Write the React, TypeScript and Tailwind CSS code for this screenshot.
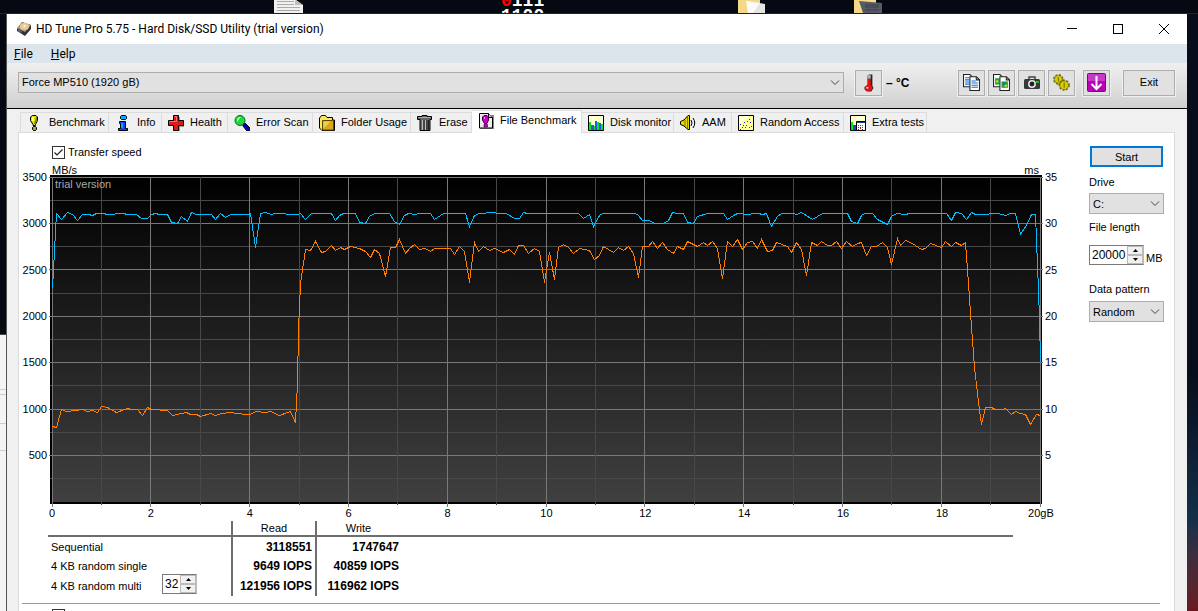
import type { ReactNode } from "react";

const BLUE =
  "52,288 56,213 61,219 67,212 72,214 77,220 82,214 88,214 92,215 96,213 103,213 107,214 113,214 116,213 123,213 127,214 136,214 141,218 147,218 151,214 155,213 159,214 167,214 171,222 177,223 181,216 187,221 191,212 196,214 211,214 215,219 220,213 225,217 230,214 248,214 250,213 255,247 260,213 265,212 271,214 274,213 283,213 288,214 297,214 300,213 305,219 311,213 331,213 335,220 339,215 343,213 355,213 359,222 365,223 369,216 374,213 389,213 394,221 399,224 404,215 408,213 414,214 419,213 430,213 434,219 440,215 443,213 465,213 469,226 474,215 479,213 493,212 498,213 506,213 514,218 519,218 523,212 527,213 578,213 583,218 589,214 593,226 599,215 602,213 635,213 638,215 642,220 648,220 655,223 663,223 668,220 672,212 677,213 683,213 687,222 693,223 697,216 707,213 723,213 727,219 733,215 737,213 748,214 753,213 758,213 762,214 766,213 771,226 777,216 781,213 793,213 796,214 801,212 812,219 822,213 847,213 851,221 857,223 861,215 864,213 872,213 877,219 887,224 891,216 896,213 905,214 909,213 946,213 951,220 955,212 961,213 966,219 971,212 975,214 987,214 990,213 998,213 1005,215 1010,213 1015,213 1020,234 1027,223 1031,214 1035,214 1038,290 1039,318 1040,362";

const ORANGE =
  "52,426 56,427 61,409 66,411 75,410 82,409 87,411 92,410 97,412 101,406 107,407 116,412 127,408 131,409 137,409 142,415 147,407 151,409 167,410 172,415 186,412 190,414 196,414 200,416 210,413 215,415 221,413 230,412 245,414 250,414 255,411 265,412 270,411 279,415 290,411 295,422 297,383 298,330 300,283 305,249 310,250 315,241 321,252 325,251 331,245 335,250 340,247 344,249 350,246 359,248 365,251 370,257 374,249 379,253 385,276 390,247 395,247 399,239 405,253 409,248 414,244 419,249 425,248 430,251 434,248 450,248 454,254 459,246 464,251 469,282 474,242 478,251 483,246 489,250 494,248 503,252 509,249 514,254 518,245 523,245 528,253 534,248 539,251 544,282 549,252 554,279 558,247 563,244 568,247 573,253 579,248 589,250 594,259 599,255 603,246 613,252 618,247 623,250 628,246 633,253 638,277 642,246 648,246 652,241 657,248 662,242 667,249 673,253 677,246 683,249 687,241 697,246 703,242 707,245 712,241 717,248 722,278 727,241 732,246 737,239 742,249 747,242 752,241 757,248 761,239 767,251 772,250 776,242 787,246 791,252 796,242 801,249 806,275 811,242 817,245 821,241 827,245 831,245 836,241 841,248 846,241 852,246 857,243 861,242 866,255 871,246 876,246 882,242 887,247 891,264 897,238 900,245 905,240 912,243 921,249 925,248 930,243 941,247 945,241 951,246 955,242 961,245 965,242 969,297 970,313 974,367 979,410 981,424 985,407 991,407 995,409 1002,409 1005,408 1011,414 1015,411 1020,413 1025,414 1030,424 1036,414 1040,415";

const SPEEDS = ["3500", "3000", "2500", "2000", "1500", "1000", "500"];
const TIMES = ["35", "30", "25", "20", "15", "10", "5"];
const POSITIONS = ["0", "2", "4", "6", "8", "10", "12", "14", "16", "18", "20gB"];

const GRID_X = Array.from({ length: 21 }, (_, i) => Math.floor(52 + i * 49.4));
const GRID_Y = Array.from({ length: 14 }, (_, i) => Math.floor(177 + i * 23.2));

function Icon({ children, size = 16 }: { children: ReactNode; size?: number }) {
  return (
    <svg
      className="shrink-0"
      width={size}
      height={size}
      viewBox="0 0 16 16"
      aria-hidden="true"
    >
      {children}
    </svg>
  );
}

const BenchmarkIcon = (
  <Icon>
    <path d="M5.500.5h3.500l1.500 1.500v3.500L8.500 9.500v1H6v-1L3.500 5.500V2z" fill="#e0e000" stroke="#000" />
    <path d="M5 2h2v4H5z" fill="#ffff90" />
    <path d="M9 2h1v4L8 9H7z" fill="#888800" />
    <path d="M5.500 12.500l1-1h2l1 1v2l-1 1h-2l-1-1z" fill="#a8a800" stroke="#000" />
  </Icon>
);

const InfoIcon = (
  <Icon>
    <path d="M6.500.500h4l1 1v2l-1 1h-4l-1-1v-2z" fill="#08a8f8" stroke="#000" />
    <path d="M4.500 6.500h6v7h2v2h-9v-2h2v-5h-1z" fill="#0048f8" stroke="#000" />
    <path d="M6 8h2v5H6z" fill="#18a0ff" />
  </Icon>
);

const HealthIcon = (
  <Icon>
    <path d="M6 2h6v4h4v6h-4v4H6z" fill="#999" />
    <path d="M5.500.5h5v5h5v5h-5v5h-5v-5h-5v-5h5z" fill="#e01818" stroke="#000" />
    <path d="M6.500 1.500h2v5h-7v1" fill="none" stroke="#ff7070" />
  </Icon>
);

const ScanIcon = (
  <Icon>
    <path d="M9 9l2-1 5 5v3h-3L9 11z" fill="#0000b8" stroke="#000" />
    <circle cx="6" cy="5.500" r="5" fill="#20d838" stroke="#063" />
    <path d="M3 4l2-2h2L3 7z" fill="#a0ffa8" />
  </Icon>
);

const FolderIcon = (
  <Icon>
    <path d="M.5 3l2-2.500h4L8 2.500h5.500V5L15.500 5v10.500H3L.5 13z" fill="#f8e860" stroke="#000" />
    <path d="M3.500 5.500h11v9.500h-11z" fill="#d8a818" stroke="#604800" />
    <path d="M4.500 6.500h7l-7 7z" fill="#f0d050" />
  </Icon>
);

const EraseIcon = (
  <Icon>
    <path d="M5 .5h5v1h4.500v3h-1.500v11H3v-11H.5v-3H5z" fill="#666" stroke="#000" />
    <path d="M1.500 2.500h12" stroke="#aaa" />
    <path d="M5.500 5v10M8.500 5v10" stroke="#bbb" />
    <path d="M7 5v10M10 5v10M11.500 5v10" stroke="#222" />
  </Icon>
);

const FileBenchIcon = (
  <Icon>
    <path d="M2 2h14v14H2z" fill="#888" />
    <path d="M1.500.500h9l4 4v10.500h-13z" fill="#ececec" stroke="#000" />
    <path d="M10.500.500v4h4" fill="#ccc" stroke="#000" />
    <path d="M6 2.500h3L10.500 4v3L9 10.500H6.500L4.500 7V4z" fill="#c800c8" stroke="#400040" />
    <path d="M6 4h1v2H6z" fill="#ff90ff" />
    <path d="M6 11.500h3.500v2.500H6z" fill="#c800c8" stroke="#400040" strokeWidth=".7" />
  </Icon>
);

const MonitorIcon = (
  <Icon>
    <path d="M.5.500h15v15H.5z" fill="#ffffd0" stroke="#000" />
    <path d="M1 7h2v8H1zM6 11h2v4H6zM9 7h2v8H9zM13 9h2v6h-2z" fill="#00e820" />
    <path d="M3 10h3v5H3zM7 6h2v9H7zM11 8h2v7h-2z" fill="#3050f0" />
  </Icon>
);

const SpeakerIcon = (
  <Icon>
    <path d="M.5 6.500L4 5 8 .5h1.500v14H8L4 11 .5 9.500z" fill="#e8d800" stroke="#000" />
    <path d="M5 5v6M7.500 2v11" stroke="#807800" />
    <path d="M11 5q2 3 0 6M13 3q3.500 5 0 10" fill="none" stroke="#000" />
  </Icon>
);

const RandomIcon = (
  <Icon>
    <path d="M.5.500h15v15H.5z" fill="#ffff98" stroke="#000" />
    <path d="M1 1h10L1 10z" fill="#ffffd8" />
    <path d="M2 9h1v1H2zM5 10h1v1H5zM6 7h1v1H6zM9 6h1v1H9zM11 4h1v1h-1zM12 7h1v1h-1z" fill="#2020c0" />
    <path d="M2 14h1v1H2zM4 12h1v1H4zM7 12h1v1H7zM8 10h1v1H8zM11 12h1v1h-1zM13 11h1v1h-1z" fill="#e00000" />
  </Icon>
);

const ExtraIcon = (
  <Icon>
    <path d="M.5.500h15v15H.5z" fill="#ffffc8" stroke="#000" />
    <path d="M1 7h2v8H1z" fill="#00e820" />
    <path d="M3 10h3v5H3z" fill="#2040e0" />
    <path d="M6.500 6.500h9v9h-9z" fill="#fff" stroke="#000" />
    <path d="M7 7h8v1H7z" fill="#2040a0" />
    <path d="M8 10h1v1H8zM10 10h1v1h-1zM12 10h1v1h-1zM8 12h1v1H8zM12 12h1v1h-1zM10 13h1v1h-1z" fill="#c02020" />
    <path d="M10 12h1v1h-1zM12 14h1v1h-1zM8 14h1v1H8z" fill="#333" />
  </Icon>
);

const TABS = [
  { label: "Benchmark", icon: BenchmarkIcon, width: "w-[89px] border-l" },
  { label: "Info", icon: InfoIcon, width: "w-[53px]" },
  { label: "Health", icon: HealthIcon, width: "w-[66px]" },
  { label: "Error Scan", icon: ScanIcon, width: "w-[85px]" },
  { label: "Folder Usage", icon: FolderIcon, width: "w-[98px]" },
  { label: "Erase", icon: EraseIcon, width: "w-[61px]" },
  { label: "File Benchmark", icon: FileBenchIcon, width: "w-[110px]", active: true },
  { label: "Disk monitor", icon: MonitorIcon, width: "w-[92px]" },
  { label: "AAM", icon: SpeakerIcon, width: "w-[58px]" },
  { label: "Random Access", icon: RandomIcon, width: "w-[112px]" },
  { label: "Extra tests", icon: ExtraIcon, width: "w-[83px]" },
];

function ToolButton({ label, children }: { label: string; children: ReactNode }) {
  return (
    <button
      aria-label={label}
      className="flex h-[26px] w-[27px] shrink-0 items-center justify-center border border-[#adadad] bg-[#e1e1e1] outline outline-[#f0f0f0]"
    >
      {children}
    </button>
  );
}

function Dropdown({ id, label, value }: { id: string; label?: string; value: string }) {
  return (
    <div className="relative w-full">
      <select
        id={id}
        aria-label={label}
        className="block h-[21px] w-full appearance-none border border-[#adadad] bg-[#e1e1e1] pl-[3px] pr-5"
      >
        <option>{value}</option>
      </select>
      <svg
        className="pointer-events-none absolute right-1 top-2"
        width="10"
        height="6"
        viewBox="0 0 10 6"
        aria-hidden="true"
      >
        <path d="M1 .5l4 4 4-4" fill="none" stroke="#444" />
      </svg>
    </div>
  );
}

function Spinner({ id, value, width }: { id: string; value: string; width: string }) {
  return (
    <span className={`flex h-5 shrink-0 border border-[#7a7a7a] border-r-[#bbb] bg-white ${width}`}>
      <input
        id={id}
        defaultValue={value}
        className="w-0 min-w-0 flex-1 pl-0.5 text-xs outline-none"
      />
      <span className="flex w-4 flex-col">
        <button
          aria-label="Increase"
          className="flex flex-1 items-center justify-center border border-[#bbb] bg-[#f0f0f0]"
        >
          <svg width="5" height="3" viewBox="0 0 5 3">
            <path d="M0 3L2.500 0 5 3z" />
          </svg>
        </button>
        <button
          aria-label="Decrease"
          className="flex flex-1 items-center justify-center border border-[#bbb] bg-[#f0f0f0]"
        >
          <svg width="5" height="3" viewBox="0 0 5 3">
            <path d="M0 0h5L2.500 3z" />
          </svg>
        </button>
      </span>
    </span>
  );
}

function Checkbox({ id, label, checked }: { id: string; label?: string; checked?: boolean }) {
  return (
    <span className="relative block size-[13px] shrink-0">
      <input
        id={id}
        type="checkbox"
        aria-label={label}
        defaultChecked={checked}
        className="peer block size-[13px] appearance-none border border-[#333] bg-white"
      />
      <svg
        className="pointer-events-none absolute inset-0 hidden peer-checked:block"
        width="13"
        height="13"
        viewBox="0 0 13 13"
        aria-hidden="true"
      >
        <path d="M2.500 6.500L5 9l5.500-5.500" fill="none" stroke="#222" strokeWidth="1.200" />
      </svg>
    </span>
  );
}

function Desktop() {
  return (
    <div className="relative h-[14px] shrink-0 overflow-hidden border-b border-[#222]">
      <svg className="absolute left-[274px] top-0" width="30" height="13" viewBox="0 0 30 13">
        <path d="M0 0h22l7 5v8H0z" fill="#f0f0f0" />
        <path d="M21 0l8 5h-8z" fill="#bbb" />
        <path d="M3 1.500h17M3 4.500h17M3 7.500h23M3 10.500h23" stroke="#aaa" />
      </svg>
      <div className="absolute left-[501px] -top-1.5 font-['Liberation_Mono',monospace] text-lg/[15px] font-bold text-white">
        <span className="text-[#f00]">0</span>111
        <br />
        1100
      </div>
      <svg className="absolute left-[738px] top-0" width="29" height="13" viewBox="0 0 29 13">
        <path d="M0 0h22v13H0z" fill="#f4d888" />
        <path d="M8 1l19 3v9H12z" fill="#e4e4e4" />
        <path d="M8 1l14 2-7 10h-5z" fill="#fafafa" />
      </svg>
      <svg className="absolute left-[854px] top-0" width="29" height="13" viewBox="0 0 29 13">
        <path d="M0 0h22v4H10v9H0z" fill="#f4d888" />
        <path d="M5 1l23 2v10H9z" fill="#555a66" />
        <path d="M11 5h14M11 7h14M11 10h14" stroke="#3a3e48" />
      </svg>
    </div>
  );
}

function TitleBar() {
  return (
    <header className="flex h-[30px] shrink-0 items-center bg-white pl-[9px] font-['Roboto',sans-serif] text-xs">
      <svg width="16" height="16" viewBox="0 0 16 16" aria-hidden="true">
        <path d="M1 8L6 1l9 3v4l-6 7-8-5z" fill="#333" />
        <path d="M1 7L6 1l9 3-6 7z" fill="#a89888" />
        <ellipse cx="8.500" cy="5.500" rx="4.500" ry="3.500" fill="#f0c890" />
        <circle cx="8.500" cy="5" r="1" fill="#fff" />
        <path d="M2 8l4 2-1 2-3-2z" fill="#666" />
      </svg>
      <h1 className="ml-1 flex-1 whitespace-nowrap">
        HD Tune Pro 5.75 - Hard Disk/SSD Utility (trial version)
      </h1>
      <button aria-label="Minimize" className="flex h-full w-[46px] items-center justify-center">
        <svg width="10" height="10" viewBox="0 0 10 10" shapeRendering="crispEdges">
          <path d="M0 4.500h10" stroke="#000" />
        </svg>
      </button>
      <button aria-label="Maximize" className="flex h-full w-[46px] items-center justify-center">
        <svg width="10" height="10" viewBox="0 0 10 10" shapeRendering="crispEdges">
          <path d="M.5.500h9v9h-9z" fill="none" stroke="#000" />
        </svg>
      </button>
      <button aria-label="Close" className="flex h-full w-[46px] items-center justify-center">
        <svg width="10" height="10" viewBox="0 0 10 10">
          <path d="M0 0l10 10M10 0L0 10" stroke="#000" />
        </svg>
      </button>
    </header>
  );
}

function Toolbar() {
  return (
    <div className="flex h-[46px] shrink-0 items-center border-b border-black bg-linear-to-b from-[#f0f0f0] to-[#d0d0d0] pl-[11px] pr-3 pb-[6px]">
      <div className="flex-1">
        <Dropdown id="disk" label="Disk" value="Force MP510 (1920 gB)" />
      </div>
      <div className="ml-[11px] flex w-[103px] items-center gap-1">
        <ToolButton label="Temperature">
          <Icon size={18}>
            <path d="M8 .5h3v10l1 2-2 3H6l-2-2v-2l3-2v-8z" fill="#222" />
            <path d="M6.500 1h3v8.500l1.500 2v2l-2 1.500H6L4.500 13.500v-2l2-2z" fill="#e81010" />
            <path d="M6.500 1h3v3h-3z" fill="#78c8c8" />
            <path d="M5.500 11.500h2V13h-2z" fill="#ffb0b0" />
          </Icon>
        </ToolButton>
        <span className="text-xs font-bold">– °C</span>
      </div>
      <div className="flex gap-[3px]">
        <ToolButton label="Copy text">
          <Icon size={17}>
            <path d="M.5.500h6l2 2V12h-8z" fill="#fff" stroke="#222" />
            <path d="M2 3.500h4M2 5.500h4M2 7.500h4M2 9.500h4" stroke="#0870d8" />
            <path d="M6.500 2.500h6l3 3v10h-9z" fill="#fff" stroke="#222" />
            <path d="M12.500 2.500v3h3" fill="none" stroke="#222" />
            <path d="M8 6.500h4M8 8.500h6M8 10.500h6M8 12.500h6" stroke="#0870d8" />
          </Icon>
        </ToolButton>
        <ToolButton label="Copy picture">
          <Icon size={17}>
            <path d="M.5.500h6l2 2V12h-8z" fill="#fff" stroke="#222" />
            <path d="M2 4h4v6H2z" fill="#18a830" />
            <path d="M3 6h2v2H3z" fill="#e8e020" />
            <path d="M6.500 2.500h6l3 3v10h-9z" fill="#fff" stroke="#222" />
            <path d="M12.500 2.500v3h3" fill="none" stroke="#222" />
            <path d="M8 7h6v6H8z" fill="#18a830" />
            <path d="M9 8h3v2H9z" fill="#2060e0" />
            <path d="M11 10h2v2h-2z" fill="#e8e020" />
          </Icon>
        </ToolButton>
        <ToolButton label="Save screenshot">
          <Icon size={16}>
            <path d="M5 4V2h6v2" fill="none" stroke="#444" strokeWidth="1.500" />
            <rect x="0" y="4" width="16" height="10" rx="1.500" fill="#383838" />
            <circle cx="8" cy="9" r="3.200" fill="#222" stroke="#e8e8e8" strokeWidth="1.500" />
            <path d="M12 6h3v2h-3z" fill="#18c018" />
          </Icon>
        </ToolButton>
        <ToolButton label="Options">
          <Icon size={17}>
            <circle cx="5" cy="5" r="4.200" fill="none" stroke="#706800" strokeWidth="1.500" strokeDasharray="2 1.300" />
            <circle cx="5" cy="5" r="3.700" fill="#d8d000" stroke="#706800" strokeWidth=".6" />
            <circle cx="10.500" cy="10.500" r="4.600" fill="none" stroke="#706800" strokeWidth="1.500" strokeDasharray="2 1.300" />
            <circle cx="10.500" cy="10.500" r="4" fill="#d8d000" stroke="#706800" strokeWidth=".6" />
            <path d="M5 3v4M10.500 8v5" stroke="#706800" />
          </Icon>
        </ToolButton>
      </div>
      <div className="ml-2 mr-[13px]">
        <ToolButton label="Update">
          <svg width="19" height="19" viewBox="0 0 19 19" aria-hidden="true">
            <rect x=".5" y=".5" width="18" height="18" rx="1" fill="#b800b8" stroke="#800080" />
            <path d="M1 1h17v7H1z" fill="#d050d0" opacity=".7" />
            <path d="M9.500 3v12M4.500 11l5 5 5-5" fill="none" stroke="#fff" strokeWidth="2" />
          </svg>
        </ToolButton>
      </div>
      <button className="h-[26px] w-[52px] border border-[#adadad] bg-[#e1e1e1] outline outline-[#f0f0f0]">
        Exit
      </button>
    </div>
  );
}

function Tabs() {
  return (
    <div role="tablist" className="flex h-[23px] shrink-0 items-end pl-[13px]">
      {TABS.map((tab) => (
        <button
          key={tab.label}
          role="tab"
          aria-selected={!!tab.active}
          className={`flex shrink-0 items-center gap-[6px] whitespace-nowrap border-t border-r border-[#dcdcdc] pl-[6px] ${tab.width} ${
            tab.active ? "z-10 -mb-px h-[23px] bg-white pb-[3px]" : "h-5 bg-[#f0f0f0]"
          }`}
        >
          {tab.icon}
          {tab.label}
        </button>
      ))}
    </div>
  );
}

function Chart() {
  return (
    <div className="flex">
      <div className="-mt-1 flex h-[290px] w-[30px] flex-col justify-between pr-0.5 text-right leading-3">
        {SPEEDS.map((speed) => (
          <span key={speed}>{speed}</span>
        ))}
      </div>
      <div className="relative min-w-0 flex-1">
        <svg
          className="block h-[332px] w-full"
          viewBox="49 175 995 332"
          preserveAspectRatio="none"
          shapeRendering="crispEdges"
          role="img"
          aria-label="Transfer speed"
        >
          <defs>
            <linearGradient id="plot" x1="0" y1="0" x2="0" y2="1">
              <stop offset="0" stopColor="#000" />
              <stop offset="1" stopColor="#404040" />
            </linearGradient>
          </defs>
          <rect x="50" y="175" width="992" height="329" fill="#000" />
          <rect x="52" y="177" width="988" height="325" fill="url(#plot)" />
          {GRID_Y.map((y, i) => (
            <rect
              key={y}
              x={i % 2 ? 50 : 49}
              y={y}
              width={i % 2 ? 991 : 994}
              height="1"
              fill={i % 2 ? "#484848" : "#787878"}
            />
          ))}
          {GRID_X.map((x, i) => (
            <rect
              key={x}
              x={x}
              y="177"
              width="1"
              height={i % 2 ? 328 : 330}
              fill={i % 2 ? "#484848" : "#787878"}
            />
          ))}
          <polyline points={ORANGE} transform="translate(.5 .5)" fill="none" stroke="#ff8000" />
          <polyline points={BLUE} transform="translate(.5 .5)" fill="none" stroke="#00bfff" />
        </svg>
        <span className="absolute left-[6px] top-[3px] leading-3 text-[#a8a8a8]">trial version</span>
      </div>
      <div className="-mt-1 flex h-[290px] w-[45px] flex-col justify-between pl-px leading-3">
        {TIMES.map((time) => (
          <span key={time}>{time}</span>
        ))}
      </div>
    </div>
  );
}

function Results() {
  return (
    <table className="mt-0.5 ml-[29px] mr-[76px] table-fixed border-collapse leading-3">
      <colgroup>
        <col className="w-[184px]" />
        <col className="w-[84px]" />
        <col className="w-[84px]" />
        <col />
      </colgroup>
      <thead>
        <tr className="h-[15px] border-b-2 border-[#6e6e6e]">
          <td />
          <th className="border-x-2 border-[#6e6e6e] font-normal">Read</th>
          <th className="font-normal">Write</th>
          <td />
        </tr>
      </thead>
      <tbody>
        <tr className="h-5">
          <th className="pl-[3px] text-left font-normal">Sequential</th>
          <td className="border-x-2 border-[#6e6e6e] pr-[3px] text-right text-xs font-bold">3118551</td>
          <td className="pr-px text-right text-xs font-bold">1747647</td>
        </tr>
        <tr className="h-5">
          <th className="pl-[3px] text-left font-normal">4 KB random single</th>
          <td className="border-x-2 border-[#6e6e6e] pr-[3px] text-right text-xs font-bold">9649 IOPS</td>
          <td className="pr-px text-right text-xs font-bold">40859 IOPS</td>
        </tr>
        <tr className="h-5">
          <th className="pl-[3px] text-left font-normal">
            <div className="-mt-2 -mb-1 flex items-end">
              <label htmlFor="queue" className="w-[111px] leading-4">
                4 KB random multi
              </label>
              <Spinner id="queue" value="32" width="w-[35px]" />
            </div>
          </th>
          <td className="border-x-2 border-[#6e6e6e] pr-[3px] text-right text-xs font-bold">121956 IOPS</td>
          <td className="pr-px text-right text-xs font-bold">116962 IOPS</td>
        </tr>
      </tbody>
    </table>
  );
}

function Sidebar() {
  return (
    <aside className="flex w-[75px] shrink-0 flex-col leading-[14px]">
      <button className="mx-px h-[21px] border-2 border-[#0078d7] bg-[#e1e1e1]">Start</button>
      <label htmlFor="drive" className="mt-2 mb-1">
        Drive
      </label>
      <Dropdown id="drive" value="C:" />
      <label htmlFor="length" className="mt-[6px] mb-[11px]">
        File length
      </label>
      <div className="mb-[17px] flex h-5 gap-0.5">
        <Spinner id="length" value="20000" width="w-[55px]" />
        <span className="self-end">MB</span>
      </div>
      <label htmlFor="pattern" className="mb-[5px]">
        Data pattern
      </label>
      <Dropdown id="pattern" value="Random" />
    </aside>
  );
}

export default function App() {
  return (
    <div className="flex h-screen flex-col overflow-hidden bg-[#050912] font-['Liberation_Sans',Arial,sans-serif] text-[11px] text-black">
      <Desktop />
      <div className="flex min-h-0 flex-1">
        <div className="flex w-[7px] shrink-0 flex-col border-r border-[#555]">
          <div className="h-[320px]" />
          <div className="flex-1 border-t border-[#444] bg-[#f4f4f4]">
            <div className="mt-[54px] h-[6px] border-y border-[#ccc]" />
            <div className="mt-[28px] h-[28px] border-y border-[#ccc]" />
          </div>
        </div>
        <div className="flex min-w-0 flex-1 flex-col bg-[#f0f0f0]">
          <TitleBar />
          <nav className="flex h-[19px] shrink-0 items-center gap-[18px] bg-[#dce4ec] pl-[7px] font-['Roboto',sans-serif] text-xs">
            <button>
              <u>F</u>ile
            </button>
            <button>
              <u>H</u>elp
            </button>
          </nav>
          <Toolbar />
          <Tabs />
          <main className="ml-[11px] mr-3 min-h-0 flex-1 overflow-hidden border border-b-0 border-[#dcdcdc] bg-white pt-[13px]">
            <div className="flex pr-[10px]">
              <div className="flex min-w-0 flex-1 flex-col">
                <div className="ml-[33px] flex h-[13px] items-center gap-[3px]">
                  <Checkbox id="transfer" checked />
                  <label htmlFor="transfer">Transfer speed</label>
                </div>
                <div className="ml-[33px] mr-[50px] mt-1 flex h-3 justify-between leading-[14px]">
                  <span>MB/s</span>
                  <span>ms</span>
                </div>
                <Chart />
                <div className="ml-[13px] mr-[28px] flex justify-between leading-3">
                  {POSITIONS.map((position) => (
                    <span key={position} className="w-10 text-center">
                      {position}
                    </span>
                  ))}
                </div>
                <Results />
              </div>
              <Sidebar />
            </div>
            <hr className="ml-[3px] mr-[14px] mt-[7px] mb-[5px] border-[#999]" />
            <div className="ml-[33px]">
              <Checkbox id="block" label="Block size" />
            </div>
          </main>
        </div>
        <div className="w-[11px] shrink-0 bg-linear-to-b from-[#070d1a] from-60% via-[#14304a] via-85% to-[#6a1820]" />
      </div>
    </div>
  );
}
